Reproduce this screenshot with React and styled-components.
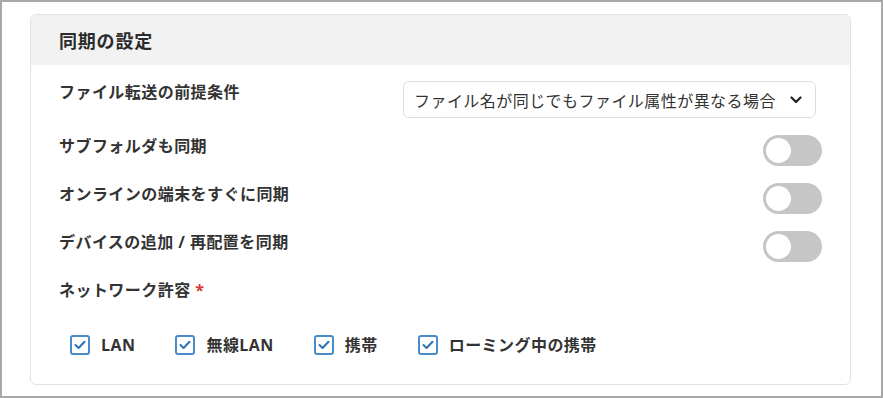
import React from 'react'
import styled, { createGlobalStyle } from 'styled-components'

const GlobalStyle = createGlobalStyle`
  html, body {
    margin: 0;
    padding: 0;
    background: #fff;
  }
  body {
    font-family: "Open Sans", "Noto Sans CJK JP", sans-serif;
    color: #333;
  }
`

const toggles = [
  'サブフォルダも同期',
  'オンラインの端末をすぐに同期',
  'デバイスの追加 / 再配置を同期',
]

const networks = ['LAN', '無線LAN', '携帯', 'ローミング中の携帯']

function Chevron() {
  return (
    <svg width='12' height='8' viewBox='0 0 12 8'>
      <path d='M1.5 1.5 L6 6 L10.5 1.5' fill='none' stroke='#222' strokeWidth='2.2' strokeLinecap='round' strokeLinejoin='round' />
    </svg>
  )
}

function Check() {
  return (
    <svg width='12' height='10' viewBox='0 0 12 10'>
      <path d='M1.5 5 L4.6 8 L10.5 1.8' fill='none' stroke='#2f72b8' strokeWidth='2' strokeLinecap='round' strokeLinejoin='round' />
    </svg>
  )
}

function App() {
  return (
    <Frame>
      <GlobalStyle />
      <Card>
        <Header>同期の設定</Header>
        <Body>
          <Row>
            <Label>ファイル転送の前提条件</Label>
            <Select>
              <span>ファイル名が同じでもファイル属性が異なる場合</span>
              <Chevron />
            </Select>
          </Row>
          {toggles.map((t) => (
            <Row key={t}>
              <Label>{t}</Label>
              <Toggle>
                <Knob />
              </Toggle>
            </Row>
          ))}
          <Label>
            ネットワーク許容 <Required>*</Required>
          </Label>
          <Checks>
            {networks.map((n) => (
              <CheckItem key={n}>
                <Box>
                  <Check />
                </Box>
                <span>{n}</span>
              </CheckItem>
            ))}
          </Checks>
        </Body>
      </Card>
    </Frame>
  )
}

export default App

const Frame = styled.div`
  width: 883px;
  height: 398px;
  box-sizing: border-box;
  border: 2px solid #a8a8a8;
  padding: 12px 30px 0 28px;
  background: #fff;
`

const Card = styled.div`
  border: 1px solid #e2e2e2;
  border-radius: 6px;
  overflow: hidden;
  background: #fff;
`

const Header = styled.div`
  height: 50px;
  background: #f2f2f2;
  display: flex;
  align-items: center;
  padding-left: 28px;
  font-size: 18px;
  letter-spacing: 0.8px;
  font-weight: bold;
  color: #2b2b2b;
`

const Body = styled.div`
  padding: 16px 28px 28px 28px;
  display: flex;
  flex-direction: column;
  gap: 17px;
`

const Row = styled.div`
  display: flex;
  justify-content: space-between;
  align-items: flex-start;
`

const Label = styled.div`
  font-size: 16px;
  line-height: 22px;
  letter-spacing: 0.45px;
  font-weight: bold;
  color: #333;
`

const Required = styled.span`
  color: #d93a2f;
`

const Select = styled.div`
  width: 413px;
  height: 37px;
  box-sizing: border-box;
  margin-right: 6px;
  border: 1px solid #dedede;
  border-radius: 6px;
  display: flex;
  align-items: center;
  justify-content: space-between;
  padding: 0 13px 0 10px;
  font-size: 16px;
  letter-spacing: 0.45px;
  color: #333;
`

const Toggle = styled.div`
  width: 59px;
  height: 31px;
  border-radius: 16px;
  background: #c6c6c6;
  display: flex;
  align-items: center;
  padding-left: 3px;
  box-sizing: border-box;
`

const Knob = styled.div`
  width: 25px;
  height: 25px;
  border-radius: 50%;
  background: #fff;
`

const Checks = styled.div`
  display: flex;
  align-items: center;
  gap: 40px;
  padding: 16px 0 0 11px;
`

const CheckItem = styled.label`
  display: flex;
  align-items: center;
  gap: 11px;
  font-size: 16px;
  line-height: 22px;
  letter-spacing: 0.45px;
  font-weight: bold;
  color: #333;
`

const Box = styled.span`
  width: 20px;
  height: 20px;
  box-sizing: border-box;
  border: 2px solid #4a8cc9;
  border-radius: 3px;
  display: flex;
  align-items: center;
  justify-content: center;
  background: #fff;
`
